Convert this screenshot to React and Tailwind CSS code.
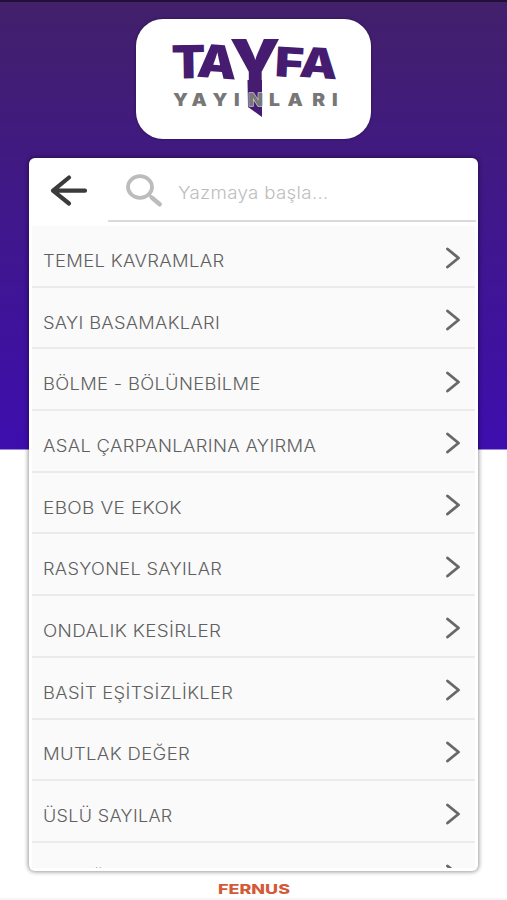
import { clsx } from "clsx";

const topics = [
  { title: "TEMEL KAVRAMLAR", stretch: "scale-x-[1.085]" },
  { title: "SAYI BASAMAKLARI", stretch: "scale-x-[1.073]" },
  { title: "BÖLME - BÖLÜNEBİLME", stretch: "scale-x-[1.08]" },
  { title: "ASAL ÇARPANLARINA AYIRMA", stretch: "scale-x-[1.083]" },
  { title: "EBOB VE EKOK", stretch: "scale-x-[1.118]" },
  { title: "RASYONEL SAYILAR", stretch: "scale-x-[1.07]" },
  { title: "ONDALIK KESİRLER", stretch: "scale-x-[1.106]" },
  { title: "BASİT EŞİTSİZLİKLER", stretch: "scale-x-[1.078]" },
  { title: "MUTLAK DEĞER", stretch: "scale-x-[1.09]" },
  { title: "ÜSLÜ SAYILAR", stretch: "scale-x-[1.06]" },
  { title: "KÖKLÜ SAYILAR", stretch: "scale-x-[1.08]" },
];

export default function App() {
  return (
    <div className="flex h-[900px] w-[507px] flex-col items-center overflow-hidden border-t-2 border-[#211038] bg-[linear-gradient(to_bottom,#42206a_0,#3e0eae_447px,#ffffff_448px)] font-['Inter',sans-serif]">
      <Logo />

      <main className="mt-5 flex h-[713px] w-[449px] flex-col overflow-hidden rounded-md bg-white px-[3px] pb-[3px] shadow-[0_0_4px_1px_rgba(0,0,0,0.4)]">
        <SearchBar />
        <ul className="min-h-0 flex-1 overflow-hidden bg-[#fafafa]">
          {topics.map((topic) => (
            <TopicRow key={topic.title} {...topic} />
          ))}
        </ul>
      </main>

      <footer className="flex w-full flex-1 justify-center border-b-2 border-[#f5f5f5] pt-[11px]">
        <Fernus />
      </footer>
    </div>
  );
}

function SearchBar() {
  return (
    <div className="flex h-[68px] shrink-0">
      <button aria-label="Geri" className="flex w-[76px] pt-[15px] pl-[17px]">
        <svg width="40" height="34" viewBox="0 0 40 34" fill="none">
          <path
            d="M36 17.7H4M20 4.5 4 17.7 20 30.5"
            stroke="#3b3b3b"
            strokeWidth="4.2"
            strokeLinecap="round"
            strokeLinejoin="round"
          />
        </svg>
      </button>
      <label className="-mr-px flex h-[64px] flex-1 border-b-2 border-[#dadada]">
        <svg
          className="mt-[15px] ml-[17px] shrink-0"
          width="40"
          height="36"
          viewBox="0 0 40 36"
          fill="none"
          stroke="#bcbcbc"
        >
          <ellipse cx="15" cy="14" rx="12" ry="10.8" strokeWidth="3.8" />
          <path d="m24.5 22.5 2.5 2" strokeWidth="3" />
          <path d="m27 24.8 7.7 6.5" strokeWidth="4.4" strokeLinecap="round" />
        </svg>
        <input
          className="ml-[13px] h-[70px] w-[200px] origin-left scale-x-[1.1] bg-transparent text-[17px] font-light tracking-[0.3px] outline-none placeholder:text-[#bdbdbd]"
          placeholder="Yazmaya başla..."
        />
      </label>
    </div>
  );
}

function TopicRow({ title, stretch }) {
  return (
    <li className="flex h-[61.7px] items-center justify-between border-b-2 border-[#ebebeb] pr-[14px] pl-[11px]">
      <span
        className={clsx(
          "origin-left pt-[10px] text-[17px] leading-6 font-light tracking-[0.3px] whitespace-nowrap text-[#606060]",
          stretch
        )}
      >
        {title}
      </span>
      <svg className="mt-[5px]" width="16" height="24" viewBox="0 0 16 24" fill="none">
        <path
          d="m2.5 3 11 9-11 9"
          stroke="#686868"
          strokeWidth="2.9"
          strokeLinecap="round"
          strokeLinejoin="round"
        />
      </svg>
    </li>
  );
}

function Logo() {
  return (
    <div className="mt-[17px] -mb-px h-[120px] w-[235px] shrink-0 rounded-[27px] bg-white shadow-[0_0_3px_rgba(0,0,0,0.4)]">
      <svg width="235" height="120" viewBox="136 19 235 120" fontWeight="900">
        <g fill="#451c70" fontSize="46">
          <text x="171.5" y="78.5" textLength="34" lengthAdjust="spacingAndGlyphs" transform="rotate(-1 188 62)">T</text>
          <text x="197" y="78" textLength="40" lengthAdjust="spacingAndGlyphs" transform="rotate(4 216 62)">A</text>
          <text x="229.5" y="89" fontSize="69" textLength="51" lengthAdjust="spacingAndGlyphs">Y</text>
          <text x="275" y="77" fontSize="41" textLength="29" lengthAdjust="spacingAndGlyphs" transform="rotate(3 289 62)">F</text>
          <text x="299.5" y="78" fontSize="42" textLength="38.5" lengthAdjust="spacingAndGlyphs" transform="rotate(4 318 62)">A</text>
          {/* pencil tip under the Y */}
          <path d="M247.5 80H262V117L248 107Z" />
        </g>
        <text
          x="150.4 166.6 184.8 203.4 215.8 234 250 271.6 288.8"
          y="106.3"
          transform="scale(1.15 1)"
          fill="#777777"
          fontSize="16.8"
          stroke="#ffffff"
          strokeWidth="0.8"
          paintOrder="stroke"
        >
          YAYINLARI
        </text>
      </svg>
    </div>
  );
}

function Fernus() {
  return (
    <svg width="74" height="14" viewBox="0 0 74 14">
      <text
        x="1"
        y="11.5"
        fill="#d45a37"
        fontSize="13"
        fontWeight="800"
        textLength="72"
        lengthAdjust="spacingAndGlyphs"
      >
        FERNUS
      </text>
    </svg>
  );
}
